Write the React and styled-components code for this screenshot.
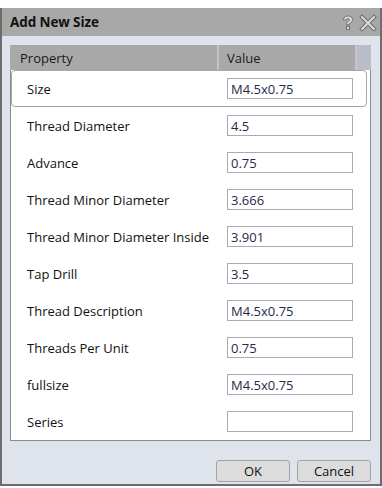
import React from "react";
import styled, { createGlobalStyle } from "styled-components";

const GlobalStyle = createGlobalStyle`
  html, body {
    margin: 0;
    padding: 0;
    background: #ffffff;
    width: 382px;
    height: 488px;
    overflow: hidden;
  }
  * { box-sizing: border-box; }
`;

const Page = styled.div`
  width: 382px;
  height: 488px;
  padding-top: 8px;
  background: #ffffff;
  font-family: "Open Sans", "Noto Sans", sans-serif;
`;

const Dialog = styled.div`
  width: 382px;
  height: 478px;
  display: flex;
  flex-direction: column;
  background: #dfe3ec;
  border-left: 2px solid #6d6d6d;
  border-right: 2px solid #6d6d6d;
  border-bottom: 2px solid #6d6d6d;
`;

const TitleBar = styled.div`
  height: 28px;
  display: flex;
  align-items: center;
  justify-content: space-between;
  padding: 0 4px 0 8px;
  background: #a8a8a8;
`;

const Title = styled.div`
  font-family: "Open Sans", "Noto Sans", sans-serif;
  font-weight: 700;
  font-size: 13.5px;
  color: #111111;
  letter-spacing: -0.1px;
`;

const TitleIcons = styled.div`
  display: flex;
  align-items: center;
  gap: 6px;
  padding-top: 2px;

  svg {
    overflow: visible;
    display: block;
  }
`;

const Body = styled.div`
  flex: 1;
  display: flex;
  flex-direction: column;
  padding: 9px 8px 0 8px;
`;

const Grid = styled.div`
  width: 361px;
  border: 1px solid #8c8c8c;
  border-top: none;
  background: #ffffff;
`;

const Header = styled.div`
  height: 25px;
  display: grid;
  grid-template-columns: 209px 138px 1fr;
  background: #a9a9a9;
  margin-left: -1px;
  margin-right: -1px;
`;

const HeaderCell = styled.div`
  display: flex;
  align-items: center;
  padding-left: ${(p) => p.$pad}px;
  font-size: 13px;
  color: #1a1a1a;
  border-right: ${(p) => (p.$sep ? "2px solid #c4c4c4" : "none")};
  background: ${(p) => (p.$filler ? "#b9bdc9" : "transparent")};
`;

const Row = styled.div`
  height: 37px;
  display: flex;
  align-items: center;
  justify-content: space-between;
  padding: 0 15px 0 15px;
  margin-right: ${(p) => (p.$selected ? 3 : 0)}px;
  border: 1px solid ${(p) => (p.$selected ? "#a6a6a6" : "transparent")};
  border-radius: ${(p) => (p.$selected ? "4px" : "0")};
`;

const Label = styled.span`
  font-size: 13px;
  color: #111111;
`;

const ValueBox = styled.div`
  width: 126px;
  height: 21px;
  border: 1px solid #a9abb3;
  padding-left: 3px;
  display: flex;
  align-items: center;
  font-size: 13px;
  color: #1f2a4a;
  margin-right: ${(p) => (p.$selected ? -2 : 1)}px;
`;

const Footer = styled.div`
  display: flex;
  justify-content: flex-end;
  gap: 7px;
  padding: 19px 1px 0 0;
`;

const Button = styled.button`
  width: 74px;
  height: 22px;
  border: 1px solid #a3a3a3;
  border-radius: 3px;
  background: #dcdcdc;
  font-family: "Open Sans", "Noto Sans", sans-serif;
  font-size: 13px;
  color: #111111;
  padding: 0;
`;

const rows = [
  ["Size", "M4.5x0.75"],
  ["Thread Diameter", "4.5"],
  ["Advance", "0.75"],
  ["Thread Minor Diameter", "3.666"],
  ["Thread Minor Diameter Inside", "3.901"],
  ["Tap Drill", "3.5"],
  ["Thread Description", "M4.5x0.75"],
  ["Threads Per Unit", "0.75"],
  ["fullsize", "M4.5x0.75"],
  ["Series", ""],
];

function HelpIcon() {
  return (
    <svg width="12" height="16" viewBox="0 0 12 16">
      <path
        d="M1.5 5 C1.5 2.2 3.5 1 6 1 C8.7 1 10.5 2.5 10.5 4.6 C10.5 6.4 9.4 7.2 8.3 7.9 C7.5 8.4 7.4 8.8 7.4 9.8 L4.6 9.8 C4.6 8.2 4.9 7.3 6.1 6.6 C7.1 6 7.5 5.6 7.5 4.8 C7.5 4 6.9 3.5 6 3.5 C5 3.5 4.4 4.1 4.4 5 Z"
        fill="#dedede"
        stroke="#666666"
        strokeWidth="0.9"
        strokeLinejoin="round"
      />
      <rect x="4.5" y="11.3" width="3" height="3" fill="#dedede" stroke="#666666" strokeWidth="0.9" />
    </svg>
  );
}

function CloseIcon() {
  return (
    <svg width="16" height="16" viewBox="0 0 16 16">
      <path
        d="M2 2 L14 14 M14 2 L2 14"
        stroke="#6a6a6a"
        strokeWidth="4"
        strokeLinecap="square"
      />
      <path
        d="M2 2 L14 14 M14 2 L2 14"
        stroke="#dcdcdc"
        strokeWidth="2"
        strokeLinecap="square"
      />
    </svg>
  );
}

export default function App() {
  return (
    <Page>
      <GlobalStyle />
      <Dialog>
        <TitleBar>
          <Title>Add New Size</Title>
          <TitleIcons>
            <HelpIcon />
            <CloseIcon />
          </TitleIcons>
        </TitleBar>
        <Body>
          <Grid>
            <Header>
              <HeaderCell $pad={10} $sep>Property</HeaderCell>
              <HeaderCell $pad={8} $sep>Value</HeaderCell>
              <HeaderCell $filler />
            </Header>
            {rows.map(([label, value], i) => (
              <Row key={label} $selected={i === 0}>
                <Label>{label}</Label>
                <ValueBox $selected={i === 0}>{value}</ValueBox>
              </Row>
            ))}
          </Grid>
          <Footer>
            <Button>OK</Button>
            <Button>Cancel</Button>
          </Footer>
        </Body>
      </Dialog>
    </Page>
  );
}
